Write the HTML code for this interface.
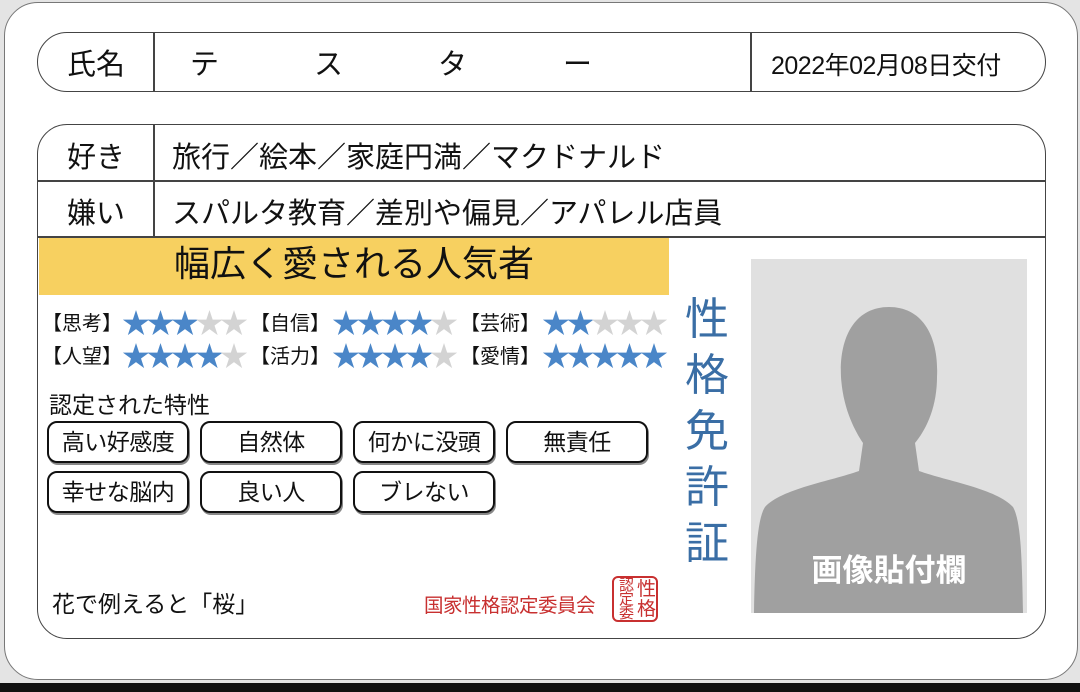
<!DOCTYPE html>
<html><head><meta charset="utf-8"><style>
*{margin:0;padding:0;box-sizing:border-box}
body{width:1080px;height:692px;background:#e4e4e4;position:relative;overflow:hidden;font-family:"Liberation Sans","Noto Sans CJK JP",sans-serif;color:#111}
.card{position:absolute;left:4px;top:2px;width:1074px;height:678px;background:#fff;border:1.5px solid #777;border-radius:34px}
.abs{position:absolute}
.box{position:absolute;border:1.5px solid #444;background:#fff}
.t{position:absolute;white-space:nowrap}
.stars{position:absolute;font-size:28px;letter-spacing:-3.5px;line-height:26px}
.b{color:#4a86c8}.g{color:#d3d3d3}
.lbl{position:absolute;font-size:20px;line-height:26px}
.chip{position:absolute;width:142px;height:42px;border:2px solid #111;border-radius:10px;font-size:23px;text-align:center;line-height:38px;box-shadow:1px 2px 0 #888;letter-spacing:-0.5px}
</style></head><body>
<div class="card"></div>
<div style="position:absolute;left:0;top:683px;width:1080px;height:9px;background:#111"></div>
<div class="box" style="left:37px;top:32px;width:1009px;height:60px;border-radius:30px"></div>
<div class="abs" style="left:153px;top:32px;width:1.5px;height:60px;background:#444"></div>
<div class="abs" style="left:750px;top:32px;width:1.5px;height:60px;background:#444"></div>
<div class="t" style="left:67px;top:41px;font-size:29px">氏名</div>
<div class="t" style="left:190px;top:41px;font-size:29px">テ</div>
<div class="t" style="left:314px;top:41px;font-size:29px">ス</div>
<div class="t" style="left:438px;top:41px;font-size:29px">タ</div>
<div class="t" style="left:563px;top:41px;font-size:29px">ー</div>
<div class="t" style="left:771px;top:46px;font-size:25px;letter-spacing:-0.5px">2022年02月08日交付</div>
<div class="box" style="left:37px;top:124px;width:1009px;height:515px;border-radius:30px"></div>
<div class="abs" style="left:37px;top:180px;width:1009px;height:1.5px;background:#444"></div>
<div class="abs" style="left:37px;top:236px;width:1009px;height:1.5px;background:#444"></div>
<div class="abs" style="left:153px;top:124px;width:1.5px;height:112px;background:#444"></div>
<div class="t" style="left:67px;top:134px;font-size:29px">好き</div>
<div class="t" style="left:172px;top:134px;font-size:29px">旅行／絵本／家庭円満／マクドナルド</div>
<div class="t" style="left:67px;top:190px;font-size:29px">嫌い</div>
<div class="t" style="left:172px;top:190px;font-size:29px">スパルタ教育／差別や偏見／アパレル店員</div>
<div class="abs" style="left:39px;top:238px;width:630px;height:57px;background:#f7d060"></div>
<div class="t" style="left:39px;top:241px;width:630px;text-align:center;font-size:36px;line-height:46px">幅広く愛される人気者</div>
<div class="lbl" style="left:42px;top:311px">【思考】</div><div class="stars" style="left:122px;top:311px"><span class="b">★★★</span><span class="g">★★</span></div>
<div class="lbl" style="left:250px;top:311px">【自信】</div><div class="stars" style="left:332px;top:311px"><span class="b">★★★★</span><span class="g">★</span></div>
<div class="lbl" style="left:460px;top:311px">【芸術】</div><div class="stars" style="left:542px;top:311px"><span class="b">★★</span><span class="g">★★★</span></div>
<div class="lbl" style="left:42px;top:344px">【人望】</div><div class="stars" style="left:122px;top:344px"><span class="b">★★★★</span><span class="g">★</span></div>
<div class="lbl" style="left:250px;top:344px">【活力】</div><div class="stars" style="left:332px;top:344px"><span class="b">★★★★</span><span class="g">★</span></div>
<div class="lbl" style="left:460px;top:344px">【愛情】</div><div class="stars" style="left:542px;top:344px"><span class="b">★★★★★</span></div>
<div class="t" style="left:49px;top:386px;font-size:23px">認定された特性</div>
<div class="chip" style="left:47px;top:421px">高い好感度</div>
<div class="chip" style="left:200px;top:421px">自然体</div>
<div class="chip" style="left:353px;top:421px">何かに没頭</div>
<div class="chip" style="left:506px;top:421px">無責任</div>
<div class="chip" style="left:47px;top:471px">幸せな脳内</div>
<div class="chip" style="left:200px;top:471px">良い人</div>
<div class="chip" style="left:353px;top:471px">ブレない</div>
<div class="t" style="left:52px;top:585px;font-size:23px">花で例えると「桜」</div>
<div class="t" style="left:424px;top:589px;font-size:19.5px;color:#c83030;letter-spacing:-0.5px">国家性格認定委員会</div>
<div class="abs" style="left:612px;top:576px;width:46px;height:46px;border:2px solid #c83030;border-radius:6px;color:#c83030;font-size:15px;line-height:14px;letter-spacing:-1px">
<div style="position:absolute;left:2px;top:1px;width:20px;text-align:center">認<br>定<br>委</div>
<div style="position:absolute;left:22px;top:2px;width:20px;text-align:center;font-size:19px;line-height:20px">性<br>格</div></div>
<div class="t" style="left:685px;top:292px;font-size:44px;line-height:56px;color:#3a6ea5;width:48px;white-space:normal">性格免許証</div>
<svg class="abs" style="left:751px;top:259px" width="276" height="354">
<rect width="276" height="354" fill="#e0e0e0"/>
<path d="M138 48 C104 48 88 78 90 118 C92 150 104 172 112 184 L108 212 C80 222 30 230 14 248 C6 260 4 300 3 354 L272 354 C271 300 270 262 262 248 C246 230 196 222 168 212 L164 184 C174 172 186 150 186 118 C188 78 172 48 138 48 Z" fill="#a0a0a0"/>
<text x="138" y="322" text-anchor="middle" font-size="31" font-weight="bold" fill="#fff" font-family="Liberation Sans,Noto Sans CJK JP,sans-serif">画像貼付欄</text>
</svg>
</body></html>
